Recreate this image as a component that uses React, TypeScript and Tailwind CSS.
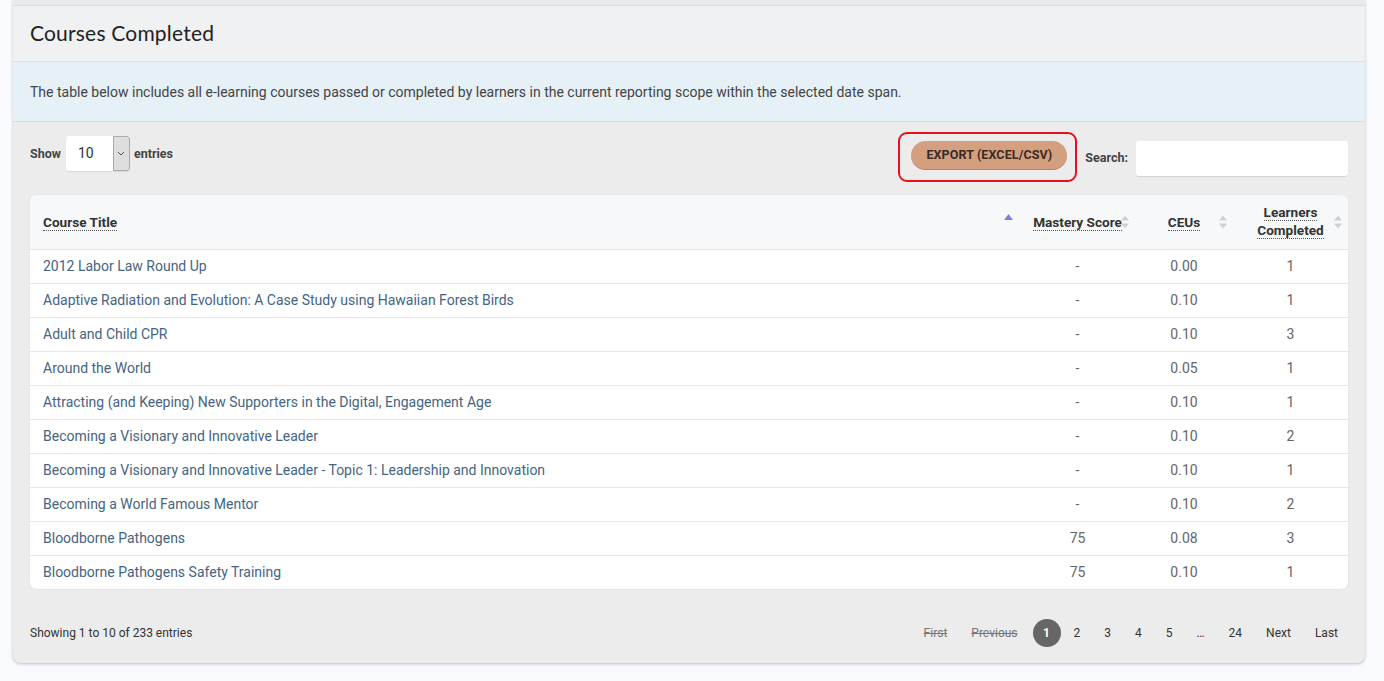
import React from 'react';

const filas = [
  { titulo: '2012 Labor Law Round Up', maestria: '-', ceu: '0.00', completados: 1 },
  { titulo: 'Adaptive Radiation and Evolution: A Case Study using Hawaiian Forest Birds', maestria: '-', ceu: '0.10', completados: 1 },
  { titulo: 'Adult and Child CPR', maestria: '-', ceu: '0.10', completados: 3 },
  { titulo: 'Around the World', maestria: '-', ceu: '0.05', completados: 1 },
  { titulo: 'Attracting (and Keeping) New Supporters in the Digital, Engagement Age', maestria: '-', ceu: '0.10', completados: 1 },
  { titulo: 'Becoming a Visionary and Innovative Leader', maestria: '-', ceu: '0.10', completados: 2 },
  { titulo: 'Becoming a Visionary and Innovative Leader - Topic 1: Leadership and Innovation', maestria: '-', ceu: '0.10', completados: 1 },
  { titulo: 'Becoming a World Famous Mentor', maestria: '-', ceu: '0.10', completados: 2 },
  { titulo: 'Bloodborne Pathogens', maestria: '75', ceu: '0.08', completados: 3 },
  { titulo: 'Bloodborne Pathogens Safety Training', maestria: '75', ceu: '0.10', completados: 1 },
];

function Orden() {
  return (
    <svg width="8" height="13" viewBox="0 0 8 13" className="absolute right-[6px] top-1/2 -translate-y-1/2">
      <path d="M4 0 L8 5 L0 5 Z" fill="#cfd0d3" />
      <path d="M4 13 L8 8 L0 8 Z" fill="#cfd0d3" />
    </svg>
  );
}

function Cabecera({ children, className = '' }: { children: React.ReactNode; className?: string }) {
  return (
    <span className={`border-b border-dotted border-[#555] leading-[16px] ${className}`}>{children}</span>
  );
}

export default function App() {
  return (
    <div className="min-h-[681px] bg-[#f9fafd] pl-[13px] pr-[19px] font-['Roboto',sans-serif]">
      <div className="rounded-b-lg bg-[#ececed] shadow-[0_1px_3px_rgba(0,0,0,0.25)] overflow-hidden">
        <div className="h-[6px] bg-[#e9eaec] border-b border-[#dcdde0]" />
        <div className="h-[56px] bg-[#f0f1f3] border-b border-[#dedfe2] px-[17px] flex items-center">
          <h1 className="-mt-[2px] font-['Lato',sans-serif] text-[21px] text-[#222] tracking-[0.2px]">Courses Completed</h1>
        </div>
        <div className="h-[60px] bg-[#e5f0f7] border-b border-[#d3dde5] px-[17px] pt-[2px] flex items-center">
          <p className="text-[14px] text-[#444]">
            The table below includes all e-learning courses passed or completed by learners in the current reporting scope within the selected date span.
          </p>
        </div>

        <div className="px-[17px]">
          <div className="flex justify-between items-start">
            <div className="mt-[14px] flex items-center gap-[4px] text-[12.5px] font-bold text-[#444]">
              <span className="pt-px">Show</span>
              <div className="ml-px flex h-[35px] w-[64px] rounded-[3px] bg-white shadow-[0_1px_1px_rgba(0,0,0,0.08)] overflow-hidden">
                <span className="flex-1 pl-[12px] flex items-center text-[14px] font-normal text-[#333]">10</span>
                <span className="w-[17px] bg-[#dedede] border border-[#a9a9a9] rounded-r-[3px] flex items-center justify-center">
                  <svg width="8" height="5" viewBox="0 0 8 5"><path d="M1 1 L4 4 L7 1" stroke="#555" strokeWidth="1" fill="none" /></svg>
                </span>
              </div>
              <span className="pt-px">entries</span>
            </div>
            <div className="mt-[10px] flex items-center">
              <div className="border-2 border-[#e8101a] rounded-[9px] pl-[11px] pr-[8px] pt-[7px] pb-[10px]">
                <button className="h-[29px] w-[156px] rounded-full bg-[#d49f7f] border-b border-[#b9856a] text-[12.5px] font-bold text-[#3a2a22] tracking-[0.1px]">
                  EXPORT (EXCEL/CSV)
                </button>
              </div>
              <span className="ml-[8px] mt-[2px] text-[12.5px] font-bold text-[#444]">Search:</span>
              <input className="ml-[8px] mt-[2px] h-[35px] w-[212px] rounded-[3px] bg-white shadow-[0_1px_1px_rgba(0,0,0,0.1)] outline-none" />
            </div>
          </div>

          <div className="mt-[13px] rounded-[6px] bg-white overflow-hidden shadow-[0_0_1px_rgba(0,0,0,0.2)]">
            <table className="w-full table-fixed border-collapse">
              <colgroup>
                <col className="w-[990px]" />
                <col className="w-[115px]" />
                <col className="w-[98px]" />
                <col className="w-[115px]" />
              </colgroup>
              <thead>
                <tr className="h-[54px] bg-[#f7f8f9] border-b border-[#e2e3e5] text-[13.6px] font-bold text-[#333]">
                  <th className="relative text-left pl-[13px] pt-[1px]">
                    <Cabecera>Course Title</Cabecera>
                    <svg width="9" height="6" viewBox="0 0 9 6" className="absolute right-[7px] top-[19px]">
                      <path d="M4.5 0 L9 6 L0 6 Z" fill="#7d84d6" />
                    </svg>
                  </th>
                  <th className="relative text-center pt-[1px]">
                    <Cabecera>Mastery Score</Cabecera>
                    <Orden />
                  </th>
                  <th className="relative text-center pt-[1px]">
                    <Cabecera>CEUs</Cabecera>
                    <Orden />
                  </th>
                  <th className="relative text-center">
                    <div className="flex flex-col items-center leading-[16px]">
                      <Cabecera>Learners</Cabecera>
                      <Cabecera className="mt-px">Completed</Cabecera>
                    </div>
                    <Orden />
                  </th>
                </tr>
              </thead>
              <tbody>
                {filas.map((f, i) => (
                  <tr key={i} className={`h-[34px] text-[14px] ${i < filas.length - 1 ? 'border-b border-[#e6e7e9]' : ''}`}>
                    <td className="pl-[13px] text-[#456483] whitespace-nowrap">{f.titulo}</td>
                    <td className="text-center text-[#666]">{f.maestria}</td>
                    <td className="text-center text-[#666]">{f.ceu}</td>
                    <td className="text-center text-[#666]">{f.completados}</td>
                  </tr>
                ))}
              </tbody>
            </table>
          </div>

          <div className="pt-[30px] pb-[16px] flex items-center justify-between">
            <span className="text-[12px] text-[#333]">Showing 1 to 10 of 233 entries</span>
            <div className="flex items-center gap-[2px] text-[12px] text-[#333] mr-[-1px]">
              <span className="px-[11px] line-through text-[#777]">First</span>
              <span className="px-[11px] mr-[2px] line-through text-[#777]">Previous</span>
              <span className="w-[28px] h-[28px] rounded-full bg-[#666] text-white font-bold flex items-center justify-center">1</span>
              <span className="px-[11px]">2</span>
              <span className="px-[11px]">3</span>
              <span className="px-[11px]">4</span>
              <span className="px-[11px]">5</span>
              <span className="px-[11px]">…</span>
              <span className="px-[11px]">24</span>
              <span className="px-[11px]">Next</span>
              <span className="px-[11px]">Last</span>
            </div>
          </div>
        </div>
      </div>
    </div>
  );
}
